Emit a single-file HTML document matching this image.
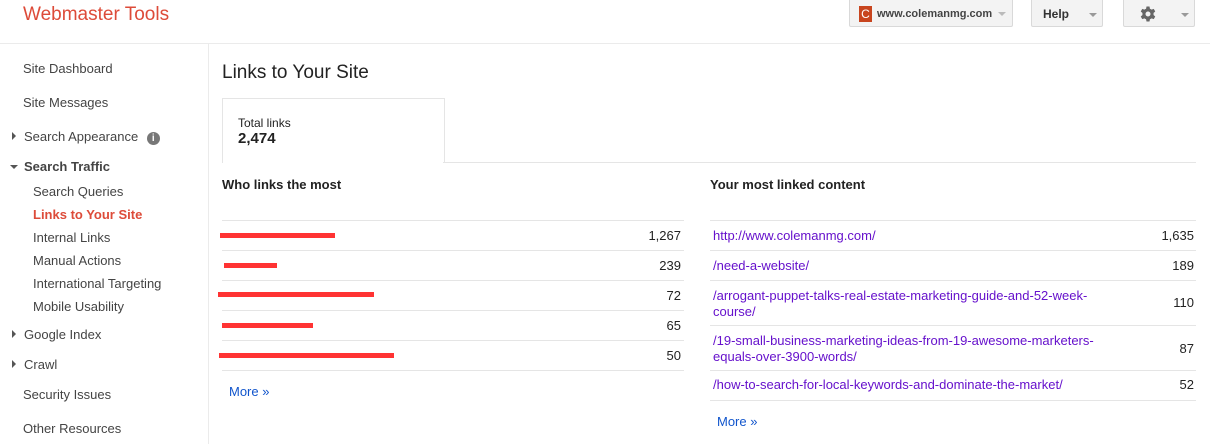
<!DOCTYPE html><html><head><style>
body{margin:0;width:1210px;height:444px;background:#fff;font-family:"Liberation Sans",Arial,sans-serif;font-size:13px;color:#222;position:relative;overflow:hidden}
.a{position:absolute;white-space:nowrap}
.nav{left:23px;color:#444;font-size:13px}
.sub{left:33px;color:#444;font-size:13px}
.tri{display:inline-block;width:0;height:0;border-top:4px solid transparent;border-bottom:4px solid transparent;border-left:4px solid #555;margin-right:8px;vertical-align:1px}
.trid{display:inline-block;width:0;height:0;border-left:4px solid transparent;border-right:4px solid transparent;border-top:4px solid #555;margin-right:6px;vertical-align:2px}
.btn{position:absolute;top:0;height:27px;border:1px solid #d9d9d9;border-top:none;border-radius:0 0 2px 2px;background:#f3f3f3;box-sizing:border-box}
.hl{position:absolute;height:1px;background:#e5e5e5}
.lnk{color:#6611cc}
.red{position:absolute;height:5px;background:#f33}
.num{position:absolute;text-align:right;color:#222}
.blue{color:#15c}
.caret{position:absolute;width:0;height:0;border-left:4px solid transparent;border-right:4px solid transparent;border-top:4px solid #999}
</style></head><body>
<div class="a" style="left:23px;top:4px;font-size:19px;color:#dd4b39">Webmaster Tools</div>
<div class="btn" style="left:849px;width:164px"></div>
<div class="a" style="left:859px;top:6px;width:13px;height:16px;background:#c8451f;color:#fff;font-size:12px;text-align:center;line-height:16px">C</div>
<div class="a" style="left:877px;top:7px;font-size:11px;font-weight:bold;color:#444;line-height:14px">www.colemanmg.com</div>
<div class="caret" style="left:998px;top:12px;border-top-color:#bbb"></div>
<div class="btn" style="left:1031px;width:72px"></div>
<div class="a" style="left:1043px;top:7px;font-size:12px;font-weight:bold;color:#333">Help</div>
<div class="caret" style="left:1089px;top:13px"></div>
<div class="btn" style="left:1123px;width:72px"></div>
<svg class="a" style="left:1138px;top:4px" width="20" height="20" viewBox="0 0 24 24"><path fill="#666" fill-rule="evenodd" d="M13.8 2h-3.6l-.5 2.7a8 8 0 00-2 1.1L5.1 4.9 3.3 8l2.1 1.8a8 8 0 000 2.4L3.3 14l1.8 3.1 2.6-.9a8 8 0 002 1.1l.5 2.7h3.6l.5-2.7a8 8 0 002-1.1l2.6.9 1.8-3.1-2.1-1.8a8 8 0 000-2.4L20.7 8l-1.8-3.1-2.6.9a8 8 0 00-2-1.1zM12 8a3 3 0 110 6 3 3 0 010-6z" transform="translate(0 1)"/></svg>
<div class="caret" style="left:1181px;top:13px"></div>
<div class="hl" style="left:0;top:43px;width:1210px;background:#ebebeb"></div>
<div style="position:absolute;left:208px;top:44px;width:1px;height:400px;background:#ebebeb"></div>

<div class="a nav" style="top:61px">Site Dashboard</div>
<div class="a nav" style="top:95px">Site Messages</div>
<div class="a nav" style="left:12px;top:129px"><span class="tri"></span>Search Appearance <span style="display:inline-block;width:13px;height:13px;border-radius:50%;background:#777;color:#fff;font-size:10px;text-align:center;line-height:13px;font-weight:bold;margin-left:5px">i</span></div>
<div class="a nav" style="left:10px;top:159px;font-weight:bold;color:#444"><span class="trid"></span>Search Traffic</div>
<div class="a sub" style="top:184px">Search Queries</div>
<div class="a sub" style="top:207px;color:#dd4b39;font-weight:bold">Links to Your Site</div>
<div class="a sub" style="top:230px">Internal Links</div>
<div class="a sub" style="top:253px">Manual Actions</div>
<div class="a sub" style="top:276px">International Targeting</div>
<div class="a sub" style="top:299px">Mobile Usability</div>
<div class="a nav" style="left:12px;top:327px"><span class="tri"></span>Google Index</div>
<div class="a nav" style="left:12px;top:357px"><span class="tri"></span>Crawl</div>
<div class="a nav" style="top:387px">Security Issues</div>
<div class="a nav" style="top:421px">Other Resources</div>

<div class="a" style="left:222px;top:62px;font-size:19px;color:#222">Links to Your Site</div>
<div style="position:absolute;left:222px;top:98px;width:221px;height:64px;border:1px solid #e5e5e5;border-bottom:none"></div>
<div class="hl" style="left:443px;top:162px;width:753px"></div>
<div class="a" style="left:238px;top:116px;font-size:12px">Total links</div>
<div class="a" style="left:238px;top:130px;font-size:15px;font-weight:bold">2,474</div>

<div class="a" style="left:222px;top:177px;font-weight:bold">Who links the most</div>
<div class="a" style="left:710px;top:177px;font-weight:bold">Your most linked content</div>

<div class="hl" style="left:222px;top:220px;width:462px"></div>
<div class="hl" style="left:222px;top:250px;width:462px"></div>
<div class="hl" style="left:222px;top:280px;width:462px"></div>
<div class="hl" style="left:222px;top:310px;width:462px"></div>
<div class="hl" style="left:222px;top:340px;width:462px"></div>
<div class="hl" style="left:222px;top:370px;width:462px"></div>
<div class="red" style="left:220px;top:233px;width:115px"></div>
<div class="red" style="left:224px;top:263px;width:53px"></div>
<div class="red" style="left:218px;top:292px;width:156px"></div>
<div class="red" style="left:222px;top:323px;width:91px"></div>
<div class="red" style="left:219px;top:353px;width:175px"></div>
<div class="num" style="right:529px;top:228px">1,267</div>
<div class="num" style="right:529px;top:258px">239</div>
<div class="num" style="right:529px;top:288px">72</div>
<div class="num" style="right:529px;top:318px">65</div>
<div class="num" style="right:529px;top:348px">50</div>
<div class="a blue" style="left:229px;top:384px">More »</div>

<div class="hl" style="left:710px;top:220px;width:486px"></div>
<div class="hl" style="left:710px;top:250px;width:486px"></div>
<div class="hl" style="left:710px;top:280px;width:486px"></div>
<div class="hl" style="left:710px;top:325px;width:486px"></div>
<div class="hl" style="left:710px;top:370px;width:486px"></div>
<div class="hl" style="left:710px;top:400px;width:486px"></div>
<div class="a lnk" style="left:713px;top:228px">http://www.colemanmg.com/</div>
<div class="a lnk" style="left:713px;top:258px">/need-a-website/</div>
<div class="a lnk" style="left:713px;top:288px;line-height:16px">/arrogant-puppet-talks-real-estate-marketing-guide-and-52-week-<br>course/</div>
<div class="a lnk" style="left:713px;top:333px;line-height:16px">/19-small-business-marketing-ideas-from-19-awesome-marketers-<br>equals-over-3900-words/</div>
<div class="a lnk" style="left:713px;top:377px">/how-to-search-for-local-keywords-and-dominate-the-market/</div>
<div class="num" style="right:16px;top:228px">1,635</div>
<div class="num" style="right:16px;top:258px">189</div>
<div class="num" style="right:16px;top:295px">110</div>
<div class="num" style="right:16px;top:341px">87</div>
<div class="num" style="right:16px;top:377px">52</div>
<div class="a blue" style="left:717px;top:414px">More »</div>
</body></html>
